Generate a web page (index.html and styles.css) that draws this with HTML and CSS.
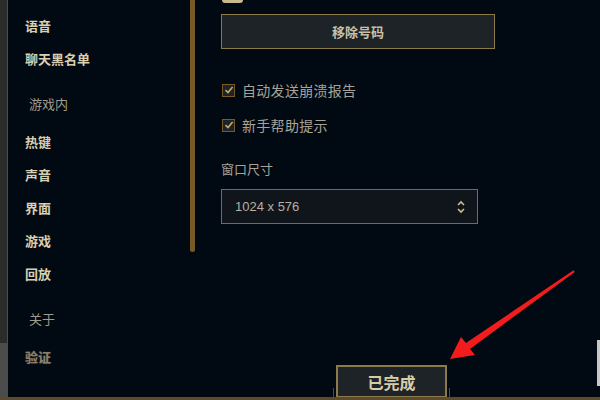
FILE: index.html
```html
<!DOCTYPE html>
<html lang="zh-CN">
<head>
  <meta charset="UTF-8" />
  <meta name="viewport" content="width=device-width, initial-scale=1.0"/>
  <title>设置</title>
  <link rel="stylesheet" href="styles.css">
</head>
<body>
<div class="app">
  <div class="main">
    <div class="edge">
      <div class="edge-top"></div>
      <div class="edge-bottom"></div>
    </div>

    <div class="frame">
      <div class="sidebar">
        <ul class="nav-list">
          <li class="nav-item">语音</li>
          <li class="nav-item">聊天黑名单</li>
          <li class="nav-header">游戏内</li>
          <li class="nav-item">热键</li>
          <li class="nav-item">声音</li>
          <li class="nav-item">界面</li>
          <li class="nav-item">游戏</li>
          <li class="nav-item">回放</li>
          <li class="nav-header">关于</li>
          <li class="nav-item faded">验证</li>
        </ul>
        <div class="scrollbar"></div>
      </div>

      <div class="content">
        <div class="toggle-cut"></div>
        <button class="gold-btn remove-btn">移除号码</button>

        <label class="check-row first">
          <span class="check-box">
            <svg width="10" height="10" viewBox="0 0 10 10"><path d="M1.5 5.2 L4 7.6 L8.6 2" fill="none" stroke="#c8aa6e" stroke-width="1.6"/></svg>
          </span>
          自动发送崩溃报告
        </label>
        <label class="check-row">
          <span class="check-box">
            <svg width="10" height="10" viewBox="0 0 10 10"><path d="M1.5 5.2 L4 7.6 L8.6 2" fill="none" stroke="#c8aa6e" stroke-width="1.6"/></svg>
          </span>
          新手帮助提示
        </label>

        <div class="field-label">窗口尺寸</div>
        <div class="select-box">
          <span>1024 x 576</span>
          <svg width="10" height="16" viewBox="0 0 10 16"><path d="M2 6 L5 3 L8 6 M2 10 L5 13 L8 10" fill="none" stroke="#cdbe91" stroke-width="1.6"/></svg>
        </div>

        <div class="done-wrap">
          <button class="gold-btn done-btn">已完成</button>
        </div>
      </div>
    </div>
  </div>
  <div class="bottom-line"></div>

  <div class="edge-mark"></div>
  <svg class="arrow" width="600" height="400" viewBox="0 0 600 400">
    <polygon points="450,359 461,337 466,343 573.5,270.3 574.8,272 470,349 475,355" fill="#f21c1c"/>
  </svg>
</div>
</body>
</html>
```

FILE: styles.css
```css
* {
  box-sizing: border-box;
}

body {
  margin: 0;
  background: #010a13;
  font-family: "Liberation Sans", "Noto Sans CJK SC", sans-serif;
  overflow: hidden;
}

.app {
  position: relative;
  width: 600px;
  height: 400px;
  display: flex;
  flex-direction: column;
}

.main {
  flex: 1;
  display: flex;
  min-height: 0;
}

.edge {
  width: 7px;
  display: flex;
  flex-direction: column;
}

.edge-top {
  height: 343px;
  background: #2b2b2c;
}

.edge-bottom {
  flex: 1;
  background: #4b4b4b;
}

.frame {
  flex: 1;
  display: flex;
  border-left: 1px solid #5b4a2b;
}

.sidebar {
  display: flex;
  align-items: flex-start;
}

.nav-list {
  list-style: none;
  margin: 0;
  width: 182px;
  padding: 10px 0 0 17px;
  font-size: 13px;
}

.nav-item {
  line-height: 33px;
  font-weight: bold;
  color: #d9cfb1;
}

.nav-header {
  line-height: 33px;
  margin: 12px 0 5px 4px;
  color: #a09b8c;
}

.faded {
  color: #8a806a;
  text-shadow: 0 0 1px #5b5447;
}

.scrollbar {
  width: 5px;
  height: 252px;
  background: #785a28;
  border-radius: 0 0 3px 3px;
}

.content {
  flex: 1;
  display: flex;
  flex-direction: column;
  align-items: flex-start;
  padding-left: 26px;
}

.toggle-cut {
  width: 21px;
  height: 3px;
  margin-left: 1px;
  background: #c9b98c;
  border-radius: 0 0 6px 6px;
}

.gold-btn {
  font-family: inherit;
  background: #1e2328;
  border: 1px solid #8c7a4d;
  color: #cdbe91;
  font-weight: bold;
  padding: 0;
}

.remove-btn {
  margin-top: 11px;
  width: 274px;
  height: 35px;
  font-size: 13px;
  color: #c9c0a6;
}

.check-row {
  display: flex;
  align-items: center;
  gap: 7px;
  height: 20px;
  margin-top: 15px;
  margin-left: 1px;
  font-size: 14px;
  letter-spacing: 0.3px;
  color: #a8a396;
}

.check-row.first {
  margin-top: 31px;
}

.check-box {
  width: 13px;
  height: 13px;
  border: 1px solid #785a28;
  background: #1e2328;
  display: flex;
  align-items: center;
  justify-content: center;
}

.field-label {
  margin-top: 25px;
  line-height: 20px;
  font-size: 13px;
  color: #a8a396;
}

.select-box {
  margin-top: 9px;
  width: 257px;
  height: 35px;
  border: 1px solid #7d6a42;
  background: #10151b;
  display: flex;
  align-items: center;
  justify-content: space-between;
  padding: 0 11px 0 13px;
  font-size: 13px;
  color: #b5b0a3;
}

.done-wrap {
  margin-top: auto;
  margin-left: 112px;
  padding: 0 3px;
  display: flex;
  background:
    linear-gradient(#5b4a2b, #5b4a2b) left bottom / 1px 9px no-repeat,
    linear-gradient(#5b4a2b, #5b4a2b) right bottom / 1px 9px no-repeat;
}

.done-btn {
  width: 111px;
  height: 33px;
  margin-bottom: -1px;
  font-size: 16px;
  color: #d8cda8;
  border: 2px solid #8c7a4d;
}

.bottom-line {
  height: 3px;
  background: #5b4a2b;
}

.edge-mark {
  position: absolute;
  right: 0;
  top: 340px;
  width: 3px;
  height: 46px;
  background: #c8c8c8;
}

.arrow {
  position: absolute;
  left: 0;
  top: 0;
  pointer-events: none;
}
```
